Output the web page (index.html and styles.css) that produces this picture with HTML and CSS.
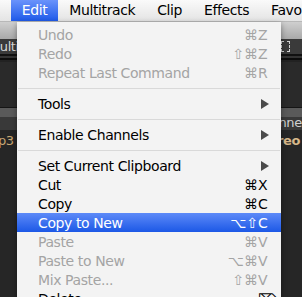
FILE: index.html
```html
<!DOCTYPE html>
<html lang="en">
<head>
    <meta charset="UTF-8">
    <title>Edit menu</title>
    <link rel="stylesheet" href="styles.css">
</head>
<body>
    <div class="menubar">
        <span class="menubar-item">File</span>
        <span class="menubar-item active">Edit</span>
        <span class="menubar-item">Multitrack</span>
        <span class="menubar-item">Clip</span>
        <span class="menubar-item">Effects</span>
        <span class="menubar-item">Favorites</span>
    </div>

    <div class="app">
        <div class="toolbar"></div>
        <div class="panel-head">
            <span class="tab"><span class="tab-text">Multitrack</span></span>
            <span class="frame-icon"></span>
        </div>
        <div class="panel-lines"></div>
        <div class="panel-body"></div>
        <div class="col-head"><span class="col-text">Channel</span></div>
        <div class="file-row">
            <span class="file-name">.mp3</span>
            <span class="file-info">Stereo</span>
        </div>
        <div class="panel-rest"></div>
    </div>

    <div class="menu">
        <div class="item disabled"><span class="label">Undo</span><span class="keys"><span class="mod">⌘</span><span class="key">Z</span></span></div>
        <div class="item disabled"><span class="label">Redo</span><span class="keys"><span class="mod">⇧⌘</span><span class="key">Z</span></span></div>
        <div class="item disabled"><span class="label">Repeat Last Command</span><span class="keys"><span class="mod">⌘</span><span class="key">R</span></span></div>
        <div class="separator"></div>
        <div class="item"><span class="label">Tools</span><span class="arrow"></span></div>
        <div class="separator"></div>
        <div class="item"><span class="label">Enable Channels</span><span class="arrow"></span></div>
        <div class="separator"></div>
        <div class="item"><span class="label">Set Current Clipboard</span><span class="arrow"></span></div>
        <div class="item"><span class="label">Cut</span><span class="keys"><span class="mod">⌘</span><span class="key">X</span></span></div>
        <div class="item"><span class="label">Copy</span><span class="keys"><span class="mod">⌘</span><span class="key">C</span></span></div>
        <div class="item selected"><span class="label">Copy to New</span><span class="keys"><span class="mod">⌥⇧</span><span class="key">C</span></span></div>
        <div class="item disabled"><span class="label">Paste</span><span class="keys"><span class="mod">⌘</span><span class="key">V</span></span></div>
        <div class="item disabled"><span class="label">Paste to New</span><span class="keys"><span class="mod">⌥⌘</span><span class="key">V</span></span></div>
        <div class="item disabled"><span class="label">Mix Paste...</span><span class="keys"><span class="mod">⇧⌘</span><span class="key">V</span></span></div>
        <div class="item"><span class="label">Delete</span><span class="keys"><span class="mod"></span><span class="key">⌦</span></span></div>
    </div>
</body>
</html>
```

FILE: styles.css
```css
body {
    margin: 0;
    width: 302px;
    height: 297px;
    overflow: hidden;
    position: relative;
    background-color: #262626;
    font-family: 'DejaVu Sans', 'Liberation Sans', sans-serif;
    font-size: 14px;
    letter-spacing: -0.4px;
}

/* Menu bar */
.menubar {
    display: flex;
    height: 21px;
    margin-left: -33px;
    background: linear-gradient(#fafafa, #e4e4e4);
    border-bottom: 1px solid #b8b8b8;
    white-space: nowrap;
}
.menubar-item {
    padding: 0 11px;
    line-height: 21px;
    color: #000;
}
.menubar-item.active {
    background: linear-gradient(#6a93fb, #1f5ae9);
    color: #fff;
}

/* Dark application behind the menu */
.app {
    display: flex;
    flex-direction: column;
}
.toolbar {
    height: 17px;
    background: linear-gradient(#cfcfcf, #a9a9a9);
}
.panel-head {
    height: 15px;
    display: flex;
    align-items: center;
    justify-content: space-between;
    background-color: #3a3a3a;
    white-space: nowrap;
}
.tab {
    width: 17px;
    overflow: hidden;
    display: flex;
}
.tab-text {
    flex-shrink: 0;
    margin-left: -11px;
    color: #d8d8d8;
    font-size: 13px;
}
.frame-icon {
    width: 7px;
    height: 9px;
    border: 1px dashed #d0d0d0;
    margin-right: 12px;
}
.panel-lines {
    height: 8px;
    background: linear-gradient(#111 0 2px, #333 2px 4px, #0c0c0c 4px 6px, #222 6px);
}
.panel-body {
    height: 45px;
    background-color: #2a2a2a;
    border-bottom: 1px solid #151515;
}
.col-head {
    height: 22px;
    display: flex;
    align-items: flex-end;
    justify-content: flex-end;
    background: linear-gradient(#5a5a5a 0 9px, #393939 9px);
    white-space: nowrap;
}
.col-text {
    color: #d0d0d0;
    font-size: 13px;
    margin-right: -3px;
    line-height: 14px;
}
.file-row {
    height: 20px;
    display: flex;
    align-items: center;
    justify-content: space-between;
    background-color: #262626;
    white-space: nowrap;
}
.file-name {
    margin-left: -18px;
    color: #c9a772;
    font-size: 13px;
}
.file-info {
    margin-right: 2px;
    color: #d6b88a;
    font-size: 13px;
    font-weight: bold;
}
.panel-rest {
    flex: 1;
}

/* Drop-down menu */
.menu {
    position: absolute;
    left: 17px;
    top: 22px;
    width: 264px;
    padding-top: 3px;
    background-color: #f3f3f3;
    box-shadow: 0 2px 6px rgba(0, 0, 0, 0.4);
}
.item {
    display: flex;
    align-items: center;
    justify-content: space-between;
    height: 19px;
    padding: 0 11px 0 21px;
    color: #000;
    white-space: nowrap;
}
.item.disabled {
    color: #a4a4a4;
}
.item.selected {
    background: linear-gradient(#5d8af8, #1c58e6);
    color: #fff;
}
.keys {
    display: flex;
    letter-spacing: 0;
}
.mod {
    text-align: right;
}
.key {
    width: 12px;
    text-align: left;
}
.arrow {
    width: 0;
    height: 0;
    margin-right: 1px;
    border-top: 5px solid transparent;
    border-bottom: 5px solid transparent;
    border-left: 8px solid #4a4a4a;
}
.separator {
    height: 12px;
    position: relative;
}
.separator::after {
    content: "";
    position: absolute;
    left: 1px;
    right: 1px;
    top: 6px;
    height: 1px;
    background-color: #d9d9d9;
}
```
